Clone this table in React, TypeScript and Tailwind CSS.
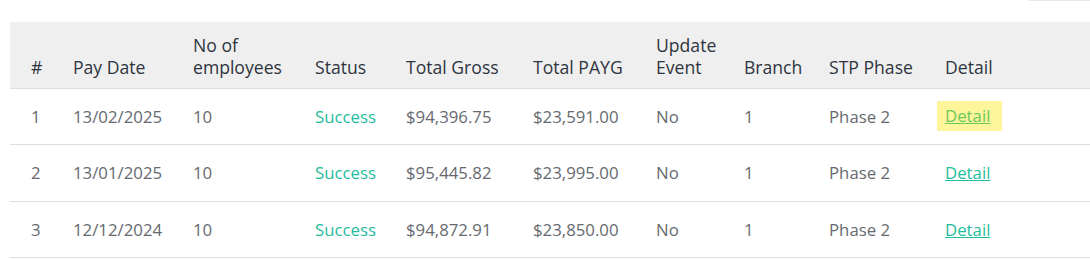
const rows = [
  { n: 1, date: "13/02/2025", emp: 10, gross: "$94,396.75", payg: "$23,591.00", hl: true },
  { n: 2, date: "13/01/2025", emp: 10, gross: "$95,445.82", payg: "$23,995.00", hl: false },
  { n: 3, date: "12/12/2024", emp: 10, gross: "$94,872.91", payg: "$23,850.00", hl: false },
]

const cols = [
  { label: "#", w: "w-[42px]" },
  { label: "Pay Date", w: "w-[120px]" },
  { label: "No of employees", w: "w-[122px]" },
  { label: "Status", w: "w-[91px]" },
  { label: "Total Gross", w: "w-[127px]" },
  { label: "Total PAYG", w: "w-[123px]" },
  { label: "Update Event", w: "w-[88px]" },
  { label: "Branch", w: "w-[85px]" },
  { label: "STP Phase", w: "w-[116px]" },
  { label: "Detail", w: "" },
]

export default function App() {
  return (
    <div className="w-[1090px] h-[259px] bg-white font-['Open_Sans',sans-serif] text-[16.8px]">
      <div className="flex justify-end">
        <div className="w-[61px] h-px bg-[#e6e6e6]" />
      </div>
      <div className="pl-[10px] pt-[21px]">
        <table className="w-full table-fixed border-collapse">
          <thead>
            <tr className="bg-[#efefef] h-[66px] border-b border-[#dedede]">
              {cols.map((c) => (
                <th
                  key={c.label}
                  className={`${c.w} text-left align-bottom font-normal text-[17.6px] text-[#2e3440] leading-[22px] pl-[21px] pr-1 pb-[10px]`}
                >
                  {c.label === "No of employees" ? (
                    <>No of<br />employees</>
                  ) : c.label === "Update Event" ? (
                    <>Update<br />Event</>
                  ) : (
                    c.label
                  )}
                </th>
              ))}
            </tr>
          </thead>
          <tbody className="text-[#666a70]">
            {rows.map((r) => (
              <tr key={r.n} className="h-[56.5px] border-b border-[#dedede]">
                <td className="pl-[21px]">{r.n}</td>
                <td className="pl-[21px]">{r.date}</td>
                <td className="pl-[21px]">{r.emp}</td>
                <td className="pl-[21px] text-[#1fbd9c]">Success</td>
                <td className="pl-[21px]">{r.gross}</td>
                <td className="pl-[21px]">{r.payg}</td>
                <td className="pl-[21px]">No</td>
                <td className="pl-[21px]">1</td>
                <td className="pl-[21px]">Phase 2</td>
                <td className="pl-[13px]">
                  {r.hl ? (
                    <span className="inline-block bg-[#fff59a] pl-[8px] pr-[12px] py-[4px] leading-[22px]">
                      <a className="underline text-[#6cc85a]">Detail</a>
                    </span>
                  ) : (
                    <span className="inline-block pl-[8px]">
                      <a className="underline text-[#1fbd9c]">Detail</a>
                    </span>
                  )}
                </td>
              </tr>
            ))}
          </tbody>
        </table>
      </div>
    </div>
  )
}
